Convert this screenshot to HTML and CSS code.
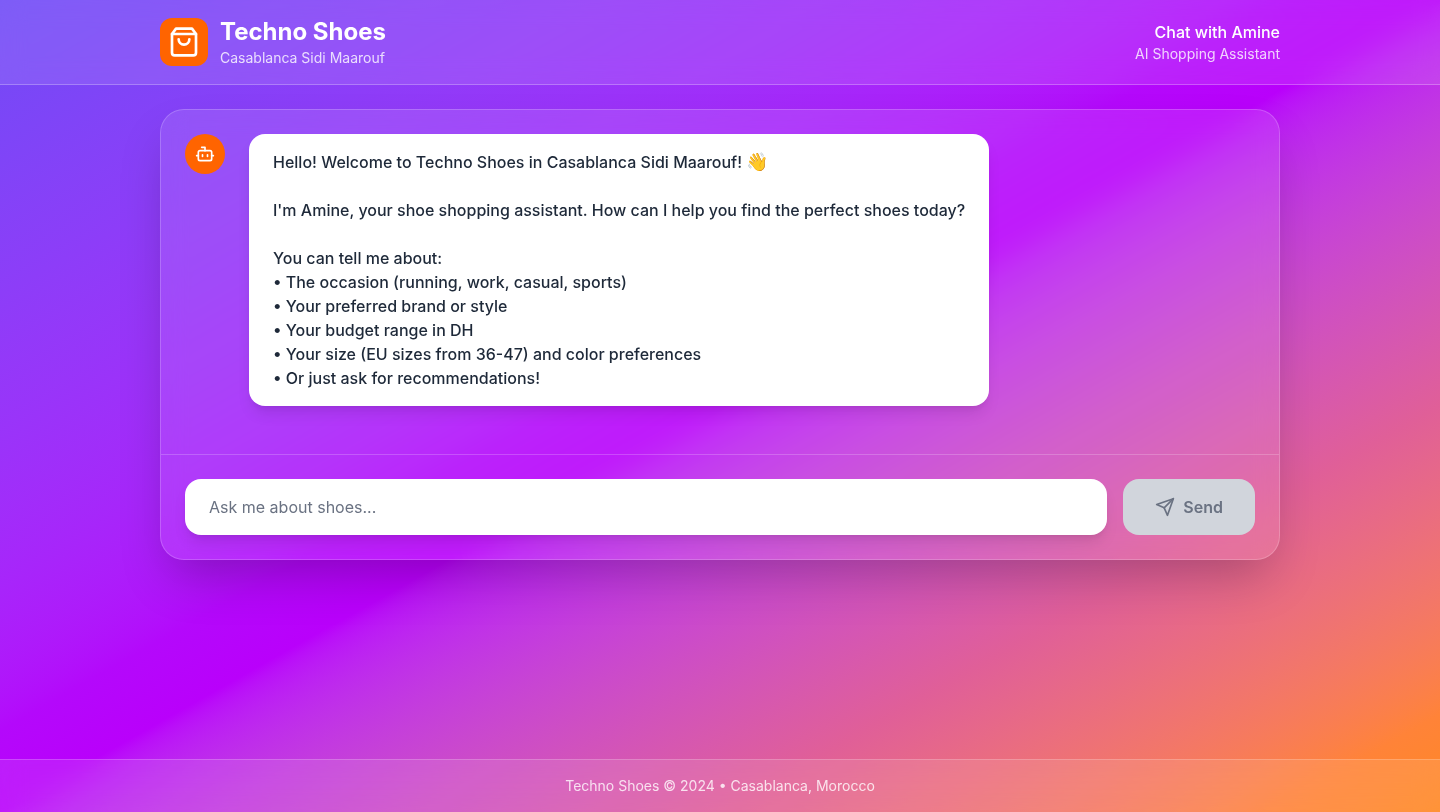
FILE: index.html
```html
<!DOCTYPE html>
<html lang="en">
<head>
<meta charset="utf-8">
<meta name="viewport" content="width=device-width, initial-scale=1">
<title>Techno Shoes</title>
<link rel="stylesheet" href="styles.css">
</head>
<body class="page">
<header class="header">
  <div class="container header-row">
    <div class="brand">
      <div class="brand-icon">
        <svg class="icon-large" viewBox="0 0 24 24" aria-hidden="true"><path d="M6 2 3 6v14a2 2 0 0 0 2 2h14a2 2 0 0 0 2-2V6l-3-4Z"/><path d="M3 6h18"/><path d="M16 10a4 4 0 0 1-8 0"/></svg>
      </div>
      <div>
        <h1 class="brand-name">Techno Shoes</h1>
        <p class="subtle">Casablanca Sidi Maarouf</p>
      </div>
    </div>
    <div class="assistant">
      <p class="assistant-name">Chat with Amine</p>
      <p class="subtle">AI Shopping Assistant</p>
    </div>
  </div>
</header>

<main class="container main">
  <section class="chat">
    <div class="messages">
      <div class="message">
        <div class="avatar">
          <svg class="icon" viewBox="0 0 24 24" aria-hidden="true"><path d="M12 8V4H8"/><rect width="16" height="12" x="4" y="8" rx="2"/><path d="M2 14h2"/><path d="M20 14h2"/><path d="M15 13v2"/><path d="M9 13v2"/></svg>
        </div>
        <p class="bubble">Hello! Welcome to Techno Shoes in Casablanca Sidi Maarouf! <span class="emoji">👋</span>

I'm Amine, your shoe shopping assistant. How can I help you find the perfect shoes today?

You can tell me about:
• The occasion (running, work, casual, sports)
• Your preferred brand or style
• Your budget range in DH
• Your size (EU sizes from 36-47) and color preferences
• Or just ask for recommendations!</p>
      </div>
    </div>
    <form class="composer">
      <input class="composer-input" type="text" placeholder="Ask me about shoes..." aria-label="Message">
      <button class="send" type="submit" disabled>
        <svg class="icon" viewBox="0 0 24 24" aria-hidden="true"><path d="m22 2-7 20-4-9-9-4Z"/><path d="M22 2 11 13"/></svg>
        Send
      </button>
    </form>
  </section>
</main>

<footer class="footer">
  <p class="container subtle">Techno Shoes © 2024 • Casablanca, Morocco</p>
</footer>
</body>
</html>
```
FILE: styles.css
```css
*, *::before, *::after {
  box-sizing: border-box;
}

h1, p {
  margin: 0;
}

.page {
  display: flex;
  flex-direction: column;
  min-height: 100vh;
  margin: 0;
  background: linear-gradient(to bottom right in oklab, #6f4bf6, #b408fb 45%, #b900fb 50%, #e05f98 75%, #ff8338 94%, #ff8820);
  color: #ffffff;
  font-family: Inter, "Noto Color Emoji", sans-serif;
  font-size: 16px;
  line-height: 24px;
}

.container {
  width: 100%;
  max-width: 1152px;
  margin: 0 auto;
  padding: 0 16px;
}

.header {
  padding: 16px 0;
  background: rgba(255, 255, 255, 0.1);
  border-bottom: 1px solid rgba(255, 255, 255, 0.25);
  backdrop-filter: blur(12px);
}

.header-row {
  display: flex;
  align-items: center;
  justify-content: space-between;
}

.brand {
  display: flex;
  align-items: center;
  gap: 12px;
}

.brand-icon {
  display: flex;
  align-items: center;
  justify-content: center;
  width: 48px;
  height: 48px;
  border-radius: 12px;
  background: #ff6400;
}

.icon, .icon-large {
  flex: none;
  width: 20px;
  height: 20px;
  fill: none;
  stroke: currentColor;
  stroke-width: 2;
  stroke-linecap: round;
  stroke-linejoin: round;
}

.icon-large {
  width: 32px;
  height: 32px;
}

.brand-name {
  font-size: 24px;
  font-weight: 700;
  line-height: 32px;
}

.subtle {
  color: rgba(255, 255, 255, 0.8);
  font-size: 14px;
  font-weight: 400;
  line-height: 20px;
}

.assistant {
  text-align: right;
}

.assistant-name {
  font-weight: 500;
}

.main {
  flex: 1;
  padding-top: 24px;
  padding-bottom: 24px;
}

.chat {
  overflow: hidden;
  border: 1px solid rgba(255, 255, 255, 0.2);
  border-radius: 24px;
  background: rgba(255, 255, 255, 0.1);
  box-shadow: 0 25px 50px -12px rgba(0, 0, 0, 0.25);
  backdrop-filter: blur(12px);
}

.messages {
  padding: 24px 24px 48px;
}

.message {
  display: flex;
  align-items: flex-start;
  gap: 24px;
}

.avatar {
  display: flex;
  flex: none;
  align-items: center;
  justify-content: center;
  width: 40px;
  height: 40px;
  border-radius: 50%;
  background: #ff6400;
}

.bubble {
  padding: 16px 24px;
  border-radius: 16px;
  background: #ffffff;
  box-shadow: 0 10px 15px -3px rgba(0, 0, 0, 0.1), 0 4px 6px -4px rgba(0, 0, 0, 0.1);
  color: #1e2939;
  font-weight: 500;
  white-space: pre-wrap;
}

.emoji {
  font-size: 18px;
  line-height: 16px;
}

.composer {
  display: flex;
  gap: 16px;
  padding: 24px;
  border-top: 1px solid rgba(255, 255, 255, 0.2);
}

.composer-input {
  flex: 1;
  min-width: 0;
  padding: 16px 24px;
  border: 0;
  border-radius: 16px;
  background: #ffffff;
  box-shadow: 0 10px 15px -3px rgba(0, 0, 0, 0.1), 0 4px 6px -4px rgba(0, 0, 0, 0.1);
  color: #1e2939;
  font: inherit;
}

.composer-input::placeholder {
  color: #6a7282;
}

.send {
  display: flex;
  align-items: center;
  gap: 8px;
  padding: 16px 32px;
  border: 0;
  border-radius: 16px;
  background: #d1d5dc;
  color: #6a7282;
  font: inherit;
  font-weight: 600;
}

.footer {
  padding: 16px 0;
  border-top: 1px solid rgba(255, 255, 255, 0.2);
  background: rgba(255, 255, 255, 0.1);
  text-align: center;
  backdrop-filter: blur(12px);
}
```
